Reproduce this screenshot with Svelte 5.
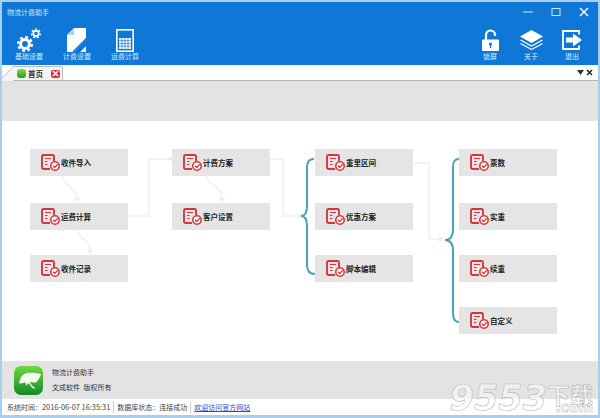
<script>
	const NODES = [
		{ label: '收件导入', x: 28, y: 28 },
		{ label: '运费计算', x: 28, y: 82 },
		{ label: '收件记录', x: 28, y: 134 },
		{ label: '计费方案', x: 170, y: 28 },
		{ label: '客户设置', x: 170, y: 82 },
		{ label: '重里区间', x: 313, y: 28 },
		{ label: '优惠方案', x: 313, y: 82 },
		{ label: '脚本编辑', x: 313, y: 134 },
		{ label: '票数', x: 457, y: 28 },
		{ label: '实重', x: 457, y: 82 },
		{ label: '续重', x: 457, y: 134 },
		{ label: '自定义', x: 457, y: 186 }
	];
</script>

<div class="window">
	<header class="header">
		<div class="titlebar">
			<span class="title">物流计费助手</span>
			<div class="win-controls">
				<svg width="12" height="12" viewBox="0 0 12 12"><path d="M1 6h10" stroke="#cfe4f8" stroke-width="1" /></svg>
				<svg width="12" height="12" viewBox="0 0 12 12"><rect x="2" y="2.5" width="8" height="7" fill="none" stroke="#cfe4f8" /></svg>
				<svg width="12" height="12" viewBox="0 0 12 12"><path d="M2 2l8 8M10 2l-8 8" stroke="#fff" stroke-width="1.4" /></svg>
			</div>
		</div>
		<div class="toolbar">
			<div class="tool-group">
				<div class="tool">
					<svg width="26" height="24" viewBox="0 0 26 24" fill="none" stroke="#fff">
						<circle cx="9" cy="16" r="4.4" stroke-width="3" />
						<circle cx="9" cy="16" r="6.8" stroke-width="2.4" stroke-dasharray="2.8 2.54" />
						<circle cx="20" cy="5.5" r="2.7" stroke-width="1.8" />
						<circle cx="20" cy="5.5" r="4.2" stroke-width="1.5" stroke-dasharray="2 1.66" />
					</svg>
					<span>基础设置</span>
				</div>
				<div class="tool">
					<svg width="20" height="24" viewBox="0 0 20 24">
						<path d="M0 7l7-7h12v12L7 24H0zM19 17v7h-7z" fill="#fff" />
						<path d="M1 7h6V1z" fill="#a9d0f2" />
						<path d="M6 24L20 10M12 24l8-8" stroke="#0f78d6" stroke-width="1.6" />
					</svg>
					<span>计费设置</span>
				</div>
				<div class="tool">
					<svg width="18" height="23" viewBox="0 0 18 23">
						<rect x="0.8" y="0.8" width="16.4" height="21.4" fill="none" stroke="#fff" stroke-width="1.6" />
						<rect x="3" y="9" width="12" height="11" fill="#fff" />
						<path d="M3 11.7h12M3 14.4h12M3 17.1h12M6 9v11M9 9v11M12 9v11" stroke="#0f78d6" stroke-width="0.7" />
					</svg>
					<span>运费计算</span>
				</div>
			</div>
			<div class="tool-group right">
				<div class="tool">
					<svg width="17" height="22" viewBox="0 0 17 22">
						<path d="M4 11V6a4.5 4.5 0 0 1 9 0v1" fill="none" stroke="#fff" stroke-width="2.2" />
						<rect x="0" y="10.5" width="17" height="11.5" rx="1" fill="#fff" />
						<circle cx="8.5" cy="15" r="1.6" fill="#0f78d6" />
						<path d="M8.5 15v4" stroke="#0f78d6" stroke-width="1.4" />
					</svg>
					<span>锁屏</span>
				</div>
				<div class="tool">
					<svg width="23" height="20" viewBox="0 0 23 20" fill="none">
						<path d="M11.5 0L23 6.5 11.5 13 0 6.5z" fill="#fff" />
						<path d="M0.5 10l11 6 11-6M0.5 13.5l11 6 11-6" stroke="#fff" stroke-width="1.2" />
					</svg>
					<span>关于</span>
				</div>
				<div class="tool">
					<svg width="20" height="20" viewBox="0 0 20 20">
						<path d="M17 4.5V1H1v18h16v-3.5" fill="none" stroke="#fff" stroke-width="1.8" />
						<path d="M4 7.5h7V3.5l9 6.5-9 6.500v-4H4z" fill="#fff" />
					</svg>
					<span>退出</span>
				</div>
			</div>
		</div>
	</header>

	<div class="tabstrip">
		<div class="tab">
			<span class="tab-icon"></span>
			<span class="tab-label">首页</span>
			<span class="tab-close">
				<svg width="7" height="7" viewBox="0 0 7 7"><path d="M1 1l5 5M6 1L1 6" stroke="#fff" stroke-width="1.5" /></svg>
			</span>
		</div>
		<div class="tab-tools">
			<svg width="7" height="5" viewBox="0 0 7 5"><path d="M0 0h7L3.500 5z" fill="#333" /></svg>
			<svg width="7" height="7" viewBox="0 0 7 7"><path d="M1 1l5 5M6 1L1 6" stroke="#222" stroke-width="1.5" /></svg>
		</div>
	</div>

	<div class="band"></div>

	<main class="canvas">
		<svg class="links" width="596" height="240" viewBox="0 0 596 240" fill="none">
			<g stroke="#f0f0f0" stroke-width="1.5">
				<path d="M60 55c2 12 13 8 15 22" />
				<path d="M75 108c2 12 11 8 13 21" />
				<path d="M205 55c2 12 13 8 15 22" />
				<path d="M126 95h21V38h20" />
				<path d="M268 38h13v57h14" />
				<path d="M412 42h15v76h10" />
			</g>
			<g fill="#ececec">
				<path d="M72 77h6l-3 4zM85 129h6l-3 4zM217 77h6l-3 4zM167 35v6l4-3zM295 92v6l4-3zM437 115v6l4-3z" />
			</g>
			<g stroke="#45a3b9" stroke-width="2">
				<path d="M312 38c-5 0-7 3-7 8v39c0 6-2 10-6 10 4 0 6 4 6 10v39c0 5 2 9 8 9" />
				<path d="M457 38c-5 0-6 3-6 8v62c0 7-2 11-8 11 6 0 8 4 8 11v60c0 7 1 11 6 11" />
			</g>
		</svg>
		{#each NODES as node (node.label)}
			<div class="node" style="left: {node.x}px; top: {node.y}px">
				<svg class="doc" width="20" height="17" viewBox="0 0 20 17" fill="none">
					<path d="M9 15H2.500A1.500 1.500 0 0 1 1 13.500V2.500A1.500 1.500 0 0 1 2.500 1h9A1.500 1.500 0 0 1 13 2.500V7" stroke="#d3383f" stroke-width="1.9" />
					<path d="M4 4.500h6M4 7.500h2.500M4 10.500h2.500" stroke="#d3383f" stroke-width="1.200" />
					<circle cx="14" cy="12" r="4.200" fill="#fff" stroke="#d3383f" stroke-width="1.600" />
					<path d="M12 11.800l1.700 1.700 3-3.200" stroke="#d3383f" stroke-width="1.300" />
				</svg>
				<span class="node-label">{node.label}</span>
			</div>
		{/each}
	</main>

	<section class="about">
		<div class="logo">
			<svg width="29" height="29" viewBox="0 0 29 29">
				<path d="M5 17C6 13 7 10 10 8c3-1.500 9-2 17 0-1 4-3 7-6 9-2-1-3-1-5-1 1 2 2 4 5 6l-1 1c-3-2-4-4-5-6-1 1-2 2-3 2l-1-3c-1 1-4 2-6 1z" fill="#f4faf0" />
			</svg>
		</div>
		<div class="about-text">
			<span>物流计费助手</span>
			<span>文成软件 版权所有</span>
		</div>
	</section>

	<footer class="status">
		<span class="cell">系统时间：<span class="time">2016-06-07 16:35:31</span></span>
		<span class="cell">数据库状态：连接成功</span>
		<a class="site" href="#top">欢迎访问官方网站</a>
	</footer>

	<div class="watermark" aria-hidden="true">
		<span class="wm-num">9553</span>
		<span class="wm-side"><span class="wm-cn">下载</span><span class="wm-com">.com</span></span>
	</div>
</div>

<style>
	:global(body) {
		margin: 0;
		background: #fff;
	}

	.window {
		position: relative;
		width: 600px;
		height: 418px;
		box-sizing: border-box;
		border: 2px solid #a9cdec;
		border-bottom-width: 3px;
		display: flex;
		flex-direction: column;
		overflow: hidden;
		font-family: 'Noto Sans CJK SC', 'Liberation Sans', sans-serif;
		color: #222;
		background: #fff;
	}

	.header {
		height: 63px;
		background: #0f78d6;
		color: #fff;
		flex: none;
	}

	.titlebar {
		height: 16px;
		display: flex;
		justify-content: space-between;
		align-items: center;
		padding: 3px 0 0 5px;
		box-sizing: border-box;
	}

	.title {
		font-size: 7px;
		color: #d5e7f8;
	}

	.win-controls {
		display: flex;
		gap: 16px;
		margin-right: 8px;
	}

	.toolbar {
		display: flex;
		justify-content: space-between;
		padding: 10px 11px 0 12px;
	}

	.tool-group {
		display: flex;
		gap: 18px;
	}

	.tool-group.right {
		gap: 11px;
	}

	.tool {
		width: 30px;
		height: 33px;
		display: flex;
		flex-direction: column;
		align-items: center;
		justify-content: flex-end;
		font-size: 7px;
		line-height: 9px;
		color: #dcebf9;
	}

	.tool svg {
		display: block;
		margin-bottom: auto;
		margin-top: auto;
	}

	.tabstrip {
		height: 16px;
		flex: none;
		background: #fff;
		border-bottom: 1px solid #b4b4b4;
		box-sizing: border-box;
		display: flex;
		justify-content: space-between;
		padding-left: 11px;
	}

	.tab {
		position: relative;
		width: 50px;
		height: 14px;
		margin-top: 1px;
		background: #f4f4f4;
		border: 1px solid #bdbdbd;
		border-left: none;
		border-bottom: none;
		border-radius: 0 2px 0 0;
		box-sizing: border-box;
		display: flex;
		align-items: center;
		padding-left: 4px;
	}

	.tab::before {
		content: '';
		position: absolute;
		left: -7px;
		top: -1px;
		width: 14px;
		height: 15px;
		background: #f4f4f4;
		border-left: 1px solid #bdbdbd;
		border-top: 1px solid #bdbdbd;
		box-sizing: border-box;
		transform: skewX(-45deg);
	}

	.tab-icon {
		position: relative;
		width: 9px;
		height: 9px;
		border-radius: 3px;
		background: linear-gradient(#7fdc4a, #2a9a24);
	}

	.tab-label {
		position: relative;
		font-size: 7.500px;
		font-weight: 700;
		margin-left: 2px;
		color: #333;
	}

	.tab-close {
		width: 9px;
		height: 8px;
		margin-left: 8px;
		background: #d33;
		border-radius: 2px;
		display: flex;
		align-items: center;
		justify-content: center;
	}

	.tab-tools {
		display: flex;
		align-items: center;
		gap: 2px;
		padding-right: 5px;
	}

	.band {
		height: 40px;
		flex: none;
		background: #e3e3e3;
	}

	.canvas {
		position: relative;
		height: 240px;
		flex: none;
		background: #fff;
	}

	.links {
		position: absolute;
		left: 0;
		top: 0;
	}

	.node {
		position: absolute;
		width: 98px;
		height: 27px;
		background: #e5e5e5;
		display: flex;
		align-items: center;
		padding: 0 0 1px 11px;
		box-sizing: border-box;
	}

	.doc {
		flex: none;
	}

	.node-label {
		font-size: 7.500px;
		font-weight: 700;
		color: #222;
	}

	.about {
		height: 38px;
		flex: none;
		background: #e3e3e3;
		display: flex;
		align-items: center;
		padding-left: 12px;
		gap: 9px;
	}

	.logo {
		width: 29px;
		height: 29px;
		border-radius: 7px;
		background: linear-gradient(#6fd83f, #128a2c);
	}

	.logo svg {
		display: block;
	}

	.about-text {
		display: flex;
		flex-direction: column;
		gap: 6px;
		font-size: 7px;
		line-height: 9px;
		color: #333;
		word-spacing: 2px;
	}

	.status {
		flex: 1;
		display: flex;
		align-items: center;
		font-size: 7px;
		color: #444;
		padding-left: 5px;
	}

	.time {
		font-size: 7.400px;
	}

	.cell {
		padding-right: 3px;
		margin-right: 3px;
		border-right: 1px solid #ccc;
		line-height: 12px;
	}

	.site {
		color: #3344cc;
		text-decoration: underline;
	}

	.watermark {
		position: absolute;
		right: 5px;
		bottom: 3px;
		display: flex;
		align-items: flex-start;
		height: 27px;
		color: rgba(255, 255, 255, 0.5);
		-webkit-text-stroke: 0.6px #b8b8b8;
		font-family: 'DejaVu Sans', 'Noto Sans CJK SC', sans-serif;
		font-weight: 700;
	}

	.wm-num {
		font-size: 35px;
		line-height: 27px;
		font-style: italic;
	}

	.wm-side {
		display: flex;
		flex-direction: column;
		align-items: flex-end;
	}

	.wm-cn {
		font-size: 23px;
		line-height: 18px;
		font-family: 'Noto Sans CJK SC', sans-serif;
	}

	.wm-com {
		font-size: 14px;
		line-height: 9px;
	}
</style>
